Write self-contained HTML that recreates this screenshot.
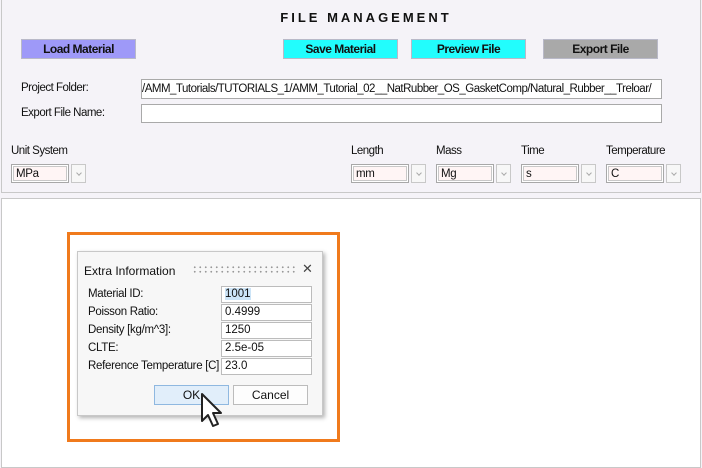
<!DOCTYPE html><html><head><style>
*{box-sizing:border-box;margin:0;padding:0}
body{width:702px;height:464px;background:#f5f3f8;font-family:"Liberation Sans",sans-serif;position:relative;overflow:hidden;color:#111}
.a{position:absolute}
.t{font-size:11.5px;letter-spacing:-0.5px;white-space:nowrap}
.btn{position:absolute;height:20px;font-size:12px;font-weight:bold;letter-spacing:-0.5px;display:flex;align-items:center;justify-content:center;border:1px solid #b9b9c8}
.in{position:absolute;background:#fff;border:1px solid #a9a9a9}
.sel{position:absolute;height:19px;background:#fff5f5;border:1px solid #a8a8a8;box-shadow:inset 0 0 0 1px #fff,inset 0 0 0 2px #c8c8c8;font-size:11.5px;padding:3px 0 0 4px;letter-spacing:-0.3px}
.arr{position:absolute;width:15px;height:19px;border:1px solid #c8c8c8;background:#f7f7f7}
.arr:after{content:"";position:absolute;left:5px;top:6px;width:3px;height:3px;border-right:1px solid #aaa;border-bottom:1px solid #aaa;transform:rotate(45deg)}
.f{position:absolute;left:221px;width:91px;height:17px;background:#fff;border:1px solid #bcbcbc;font-size:11.5px;padding:1px 3px}
.l{position:absolute;left:88px;font-size:11.5px;letter-spacing:-0.3px}
</style></head><body>
<div class="a" style="left:1px;top:0;width:700px;height:193px;border:1px solid #c8c8c8;border-top:none"></div>
<div class="a" style="left:0;top:10px;width:702px;text-align:center;font-size:13px;font-weight:bold;letter-spacing:3px;padding-left:30px">FILE MANAGEMENT</div>
<div class="btn" style="left:21px;top:39px;width:115px;background:#9e99f8">Load Material</div>
<div class="btn" style="left:283px;top:39px;width:115px;background:#22fdfd">Save Material</div>
<div class="btn" style="left:411px;top:39px;width:115px;background:#22fdfd">Preview File</div>
<div class="btn" style="left:543px;top:39px;width:115px;background:#a9a9a9">Export File</div>
<div class="a t" style="left:21px;top:82px">Project Folder:</div>
<div class="in t" style="left:141px;top:79px;width:521px;height:20px;overflow:hidden;padding:3px 0 0 0;direction:rtl;text-align:left"><span style="direction:ltr;unicode-bidi:embed">/AMM_Tutorials/TUTORIALS_1/AMM_Tutorial_02__NatRubber_OS_GasketComp/Natural_Rubber__Treloar/</span></div>
<div class="a t" style="left:21px;top:107px">Export File Name:</div>
<div class="in" style="left:141px;top:104px;width:521px;height:19px"></div>
<div class="a t" style="left:11px;top:145px">Unit System</div>
<div class="sel" style="left:11px;top:164px;width:58px">MPa</div><div class="arr" style="left:71px;top:164px"></div>
<div class="a t" style="left:351px;top:145px">Length</div>
<div class="sel" style="left:351px;top:164px;width:58px">mm</div><div class="arr" style="left:411px;top:164px"></div>
<div class="a t" style="left:436px;top:145px">Mass</div>
<div class="sel" style="left:436px;top:164px;width:58px">Mg</div><div class="arr" style="left:496px;top:164px"></div>
<div class="a t" style="left:521px;top:145px">Time</div>
<div class="sel" style="left:521px;top:164px;width:58px">s</div><div class="arr" style="left:581px;top:164px"></div>
<div class="a t" style="left:606px;top:145px">Temperature</div>
<div class="sel" style="left:606px;top:164px;width:58px">C</div><div class="arr" style="left:666px;top:164px"></div>
<div class="a" style="left:1px;top:198px;width:700px;height:270px;background:#fff;border:1px solid #c8c8c8"></div>
<div class="a" style="left:67px;top:232px;width:273px;height:210px;border:3px solid #f07a1c"></div>
<div class="a" style="left:77px;top:251px;width:246px;height:165px;background:#f7f7f7;border:1px solid #c8c8c8;box-shadow:2px 2px 4px rgba(0,0,0,.3)"></div>
<div class="a" style="left:84px;top:264px;font-size:12px">Extra Information</div>
<div class="a" style="left:192px;top:265px;width:104px;height:9px;background-image:radial-gradient(circle,#999 0.8px,transparent 1.1px);background-size:5.5px 4.5px"></div>
<div class="a" style="left:302px;top:261px;font-size:13px;color:#444">✕</div>
<div class="l" style="top:288px">Material ID:</div><div class="f" style="top:286px"><span style="background:#cce4f7">1001</span></div>
<div class="l" style="top:306px">Poisson Ratio:</div><div class="f" style="top:304px">0.4999</div>
<div class="l" style="top:324px">Density [kg/m^3]:</div><div class="f" style="top:322px">1250</div>
<div class="l" style="top:342px">CLTE:</div><div class="f" style="top:340px">2.5e-05</div>
<div class="l" style="top:360px">Reference Temperature [C]</div><div class="f" style="top:358px">23.0</div>
<div class="a" style="left:154px;top:385px;width:75px;height:20px;background:#e1eefa;border:1px solid #8fb8e0;font-size:12px;text-align:center;line-height:18px">OK</div>
<div class="a" style="left:233px;top:385px;width:75px;height:20px;background:#fdfdfd;border:1px solid #bcbcbc;font-size:12px;text-align:center;line-height:18px">Cancel</div>
<svg class="a" style="left:199px;top:392px" width="30" height="40" viewBox="0 0 30 40"><path d="M3 2 L3 29 L9 23 L14 34 L19 32 L14 21 L22 21 Z" fill="#fff" stroke="#222" stroke-width="2" stroke-linejoin="round"/></svg>
</body></html>
